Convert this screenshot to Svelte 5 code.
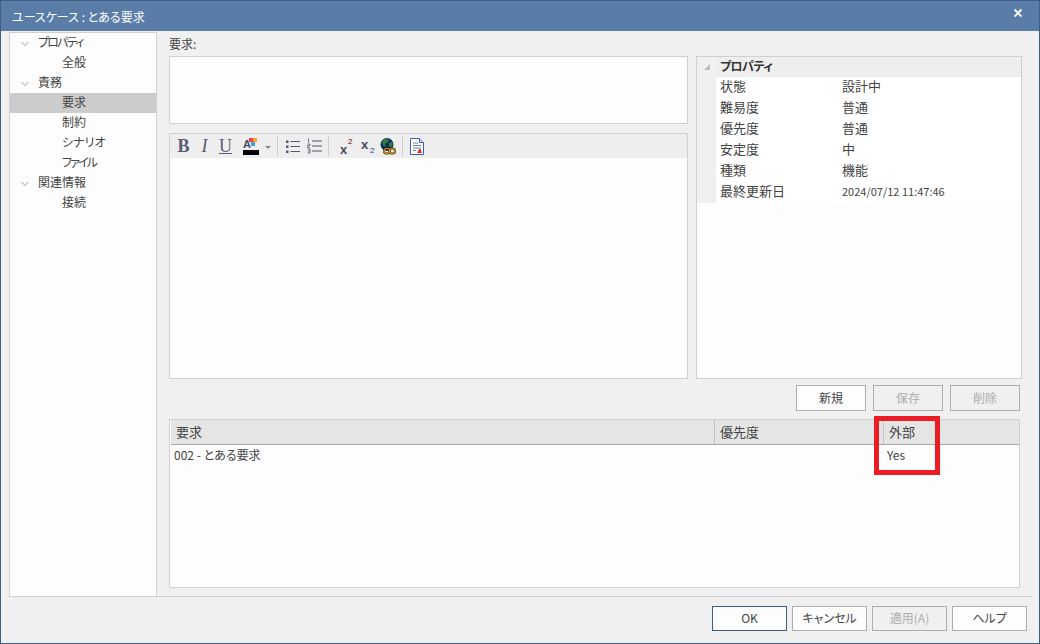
<script lang="ts">
  const tree = [
    { label: 'プロパティ', top: true, tight: true },
    { label: '全般' },
    { label: '責務', top: true },
    { label: '要求', selected: true },
    { label: '制約' },
    { label: 'シナリオ' },
    { label: 'ファイル', tight: true },
    { label: '関連情報', top: true },
    { label: '接続' }
  ];

  const props = [
    ['状態', '設計中'],
    ['難易度', '普通'],
    ['優先度', '普通'],
    ['安定度', '中'],
    ['種類', '機能'],
    ['最終更新日', '2024/07/12 11:47:46']
  ];
</script>

<div class="window">
  <header class="titlebar">
    <span>ユースケース : とある要求</span>
    <svg class="close" width="10" height="10" viewBox="0 0 10 10">
      <path d="M1.5 1.5l7 7M8.5 1.5l-7 7" stroke="#fff" stroke-width="1.8" fill="none" />
    </svg>
  </header>

  <div class="body">
    <nav class="tree">
      {#each tree as item}
        <div class="row" class:selected={item.selected} class:top={item.top} class:tight={item.tight}>
          {#if item.top}
            <svg class="chev" width="8" height="6" viewBox="0 0 8 6">
              <path d="M0.5 1l3.5 3.5L7.5 1" stroke="#999" fill="none" />
            </svg>
          {/if}
          <span>{item.label}</span>
        </div>
      {/each}
    </nav>

    <main class="pane">
      <div class="label">要求:</div>
      <div class="upper">
        <div class="left">
          <div class="box summary"></div>
          <div class="box editor">
            <div class="toolbar">
              <span class="tool bold">B</span>
              <span class="tool italic">I</span>
              <span class="tool under">U</span>
              <span class="color">
                <span class="color-a">A</span>
                <i class="sq red"></i><i class="sq orange"></i><i class="sq blue"></i>
                <i class="bar"></i>
              </span>
              <svg class="caret" width="6" height="3" viewBox="0 0 6 3"><path d="M0 0h6L3 3z" fill="#888" /></svg>
              <i class="sep s1"></i>
              <svg class="list" width="14" height="15" viewBox="0 0 14 15">
                <path d="M0 1.5h2.5v2.5H0zM0 6.5h2.5V9H0zM0 11.5h2.5V14H0z" fill="#55556f" />
                <path d="M4.5 2.500H14M4.500 7.500H14M4.500 12.500H14" stroke="#55556f" />
              </svg>
              <svg class="list l2" width="15" height="16" viewBox="0 0 15 16">
                <path d="M1.500 0.500v4M0.500 6h2.500v1.500H0.500V9.500H3M0.500 11H3v4H0.500M1 13h2" stroke="#55556f" fill="none" stroke-width="0.8" />
                <path d="M5 3H15M5 8H15M5 13H15" stroke="#55556f" />
              </svg>
              <i class="sep s2"></i>
              <span class="script sup"><em>x</em><b>2</b></span>
              <span class="script sub"><em>x</em><b>2</b></span>
              <svg class="globe" width="17" height="17" viewBox="0 0 17 17">
                <circle cx="8" cy="6.500" r="6.500" fill="#0e2a5e" />
                <path d="M4 2l3-1.500 3 1-1 3-3 1 1 3-2 0-2-3zM10 5l3-1.500 1 3-2 3-2-1z" fill="#2e7d3a" />
                <g fill="none" stroke="#4a3000" stroke-width="2">
                  <rect x="5" y="10.500" width="6" height="5" rx="2.500" />
                  <rect x="10" y="10.500" width="6" height="5" rx="2.500" />
                </g>
                <g fill="none" stroke="#e0a830">
                  <rect x="5" y="10.500" width="6" height="5" rx="2.500" />
                  <rect x="10" y="10.500" width="6" height="5" rx="2.500" />
                </g>
              </svg>
              <i class="sep s3"></i>
              <svg class="doc" width="14" height="17" viewBox="0 0 14 17">
                <path d="M0.500 0.500h9l4 4v12H0.500z" fill="#fff" stroke="#3a5fc0" />
                <path d="M9.500 0.500v4h4" fill="#cfd9f2" stroke="#3a5fc0" />
                <path d="M3 5h5M3 7.500h8M3 10h8M3 12.500h3" stroke="#6a7fc0" />
                <path d="M7 15l3-5 2 5z" fill="#d8301c" />
              </svg>
            </div>
          </div>
        </div>

        <section class="box props">
          <div class="props-head">
            <div class="gutter">
              <svg width="6" height="6" viewBox="0 0 6 6"><path d="M6 0v6H0z" fill="#bbb" /></svg>
            </div>
            <strong>プロパティ</strong>
          </div>
          {#each props as [name, value]}
            <div class="prop">
              <div class="gutter"></div>
              <span class="name">{name}</span>
              <span class="value" class:small={value.length > 10}>{value}</span>
            </div>
          {/each}
        </section>
      </div>

      <div class="actions">
        <button>新規</button>
        <button disabled>保存</button>
        <button disabled>削除</button>
      </div>

      <section class="box table">
        <div class="thead">
          <span class="c1">要求</span>
          <span class="c2">優先度</span>
          <span class="c3">外部</span>
          <span class="c4"></span>
        </div>
        <div class="tr">
          <span class="d1">002 - とある要求</span>
          <span class="d3">Yes</span>
        </div>
        <div class="mark"></div>
      </section>
    </main>
  </div>

  <footer class="footer">
    <button class="primary">OK</button>
    <button>キャンセル</button>
    <button disabled>適用(A)</button>
    <button>ヘルプ</button>
  </footer>
</div>

<style>
  :global(body) {
    margin: 0;
  }

  .window {
    box-sizing: border-box;
    width: 1040px;
    height: 644px;
    display: flex;
    flex-direction: column;
    background: #f0f0f0;
    border: 1px solid #3c5f86;
    color: #444;
    font-family: "Noto Sans CJK JP", "Open Sans", sans-serif;
    font-size: 12px;
    font-feature-settings: "palt";
    overflow: hidden;
  }

  .titlebar {
    height: 30px;
    flex: none;
    display: flex;
    align-items: center;
    justify-content: space-between;
    padding: 0 16px 0 11px;
    background: #5a7da8;
    color: #fff;
    font-size: 12px;
  }

  .close {
    margin-top: -7px;
  }

  .body {
    flex: 1;
    min-height: 0;
    display: flex;
    padding: 1px 0 0 8px;
  }

  .tree {
    box-sizing: border-box;
    width: 148px;
    height: 565px;
    flex: none;
    background: #fdfdfd;
    border: 1px solid #d0d0d0;
  }

  .row {
    height: 20px;
    line-height: 18px;
    padding-left: 52px;
    position: relative;
  }

  .row.top {
    padding-left: 28px;
  }

  .row.tight {
    letter-spacing: -1.8px;
  }

  .row.selected {
    background: #cccccc;
  }

  .chev {
    position: absolute;
    left: 11px;
    top: 8px;
  }

  .pane {
    flex: 1;
    min-width: 0;
    padding-left: 12px;
    position: relative;
  }

  .label {
    height: 24px;
    line-height: 23px;
  }

  .upper {
    display: flex;
    gap: 8px;
  }

  .left {
    width: 519px;
    display: flex;
    flex-direction: column;
    gap: 9px;
  }

  .box {
    box-sizing: border-box;
    background: #fdfdfd;
    border: 1px solid #d0d0d0;
  }

  .summary {
    height: 68px;
  }

  .editor {
    height: 246px;
  }

  .toolbar {
    height: 24px;
    display: flex;
    align-items: center;
    background: #eeeeee;
    color: #5a5a74;
    padding-left: 3px;
  }

  .tool {
    width: 21px;
    text-align: center;
    font-family: "Liberation Serif", serif;
    font-size: 18px;
    line-height: 24px;
  }

  .bold {
    font-weight: 700;
  }

  .italic {
    font-style: italic;
  }

  .under {
    text-decoration: underline;
    text-underline-offset: 1px;
  }

  .color {
    position: relative;
    width: 16px;
    height: 20px;
    margin-left: 7px;
  }

  .color-a {
    position: absolute;
    left: 0;
    top: 2px;
    font-size: 11px;
    line-height: 12px;
    font-family: "Liberation Sans", sans-serif;
    font-weight: 700;
    color: #4a4a62;
  }

  .sq {
    position: absolute;
    width: 4px;
    height: 4px;
  }

  .red {
    left: 6px;
    top: 2px;
    background: #f04040;
  }

  .orange {
    left: 10px;
    top: 2px;
    background: #ffa030;
  }

  .blue {
    left: 8px;
    top: 6px;
    background: #3aa0f0;
  }

  .bar {
    position: absolute;
    left: 0;
    right: 0;
    bottom: 1px;
    height: 5px;
    background: #000;
  }

  .caret {
    margin: 3px 0 0 6px;
  }

  .sep {
    width: 1px;
    height: 21px;
    background: #cfcfcf;
  }

  .s1 {
    margin: 0 0 0 6px;
  }

  .list {
    margin-left: 8px;
  }

  .l2 {
    margin-left: 7px;
  }

  .s2 {
    margin-left: 6px;
  }

  .script {
    width: 13px;
    height: 24px;
    font-family: "Liberation Sans", sans-serif;
    font-size: 13px;
    font-weight: 700;
    position: relative;
    color: #4a4a62;
  }

  .script em {
    position: absolute;
    left: 0;
    font-style: normal;
    line-height: 14px;
  }

  .script b {
    position: absolute;
    font-size: 8px;
    font-weight: 400;
    line-height: 8px;
  }

  .sup {
    margin-left: 11px;
  }

  .sup em {
    top: 9px;
  }

  .sup b {
    left: 8px;
    top: 4px;
    color: #800000;
  }

  .sub {
    margin-left: 8px;
  }

  .sub em {
    top: 4px;
  }

  .sub b {
    left: 9px;
    top: 13px;
    color: #2040c0;
  }

  .globe {
    margin-left: 5px;
  }

  .s3 {
    margin-left: 6px;
  }

  .doc {
    margin-left: 7px;
  }

  .props {
    width: 326px;
    background: #fdfdfd;
  }

  .props-head {
    height: 20px;
    display: flex;
    background: #eeeeee;
    line-height: 18px;
    color: #333;
  }

  .props-head strong {
    font-size: 12px;
    padding-left: 4px;
    letter-spacing: -0.6px;
  }

  .gutter {
    width: 19px;
    flex: none;
    align-self: stretch;
    background: #f0f0f0;
    display: flex;
    align-items: center;
    justify-content: center;
  }

  .prop {
    height: 21px;
    line-height: 18px;
    display: flex;
    background: #fff;
    font-size: 13px;
  }

  .name {
    width: 126px;
    flex: none;
    padding-left: 4px;
    box-sizing: border-box;
  }

  .value {
    color: #444;
  }

  .value.small {
    font-size: 11px;
  }

  .actions {
    display: flex;
    justify-content: flex-end;
    gap: 7px;
    width: 851px;
    margin: 6px 0 8px;
  }

  .actions button {
    width: 70px;
    height: 26px;
  }

  button {
    box-sizing: border-box;
    background: #fdfdfd;
    border: 1px solid #adadad;
    border-radius: 0;
    padding: 0 0 2px;
    font: inherit;
    font-feature-settings: inherit;
    color: #444;
  }

  button:disabled {
    color: #adadad;
    background: #f0f0f0;
  }

  .table {
    width: 851px;
    height: 169px;
  }

  .thead {
    height: 25px;
    display: flex;
    background: #e5e5e5;
    border-bottom: 1px solid #a9a9a9;
    box-sizing: border-box;
    margin-left: 1px;
    line-height: 24px;
  }

  .thead span {
    box-sizing: border-box;
    padding-left: 5px;
    font-size: 13px;
  }

  .c1 {
    width: 543px;
  }

  .c2 {
    width: 169px;
    border-left: 1px solid #c4c4c4;
  }

  .c3 {
    width: 60px;
    border-left: 1px solid #c4c4c4;
  }

  .tr {
    display: flex;
    line-height: 20px;
  }

  .d1 {
    width: 713px;
    padding-left: 4px;
  }

  .mark {
    position: absolute;
    left: 717px;
    top: 384px;
    width: 56px;
    height: 49px;
    border: 5px solid #ed1c24;
  }

  .footer {
    height: 47px;
    flex: none;
    box-sizing: border-box;
    margin-right: 7px;
    margin-left: 156px;
    border-top: 1px solid #d0d0d0;
    display: flex;
    justify-content: flex-end;
    gap: 5px;
    padding: 9px 5px 0 0;
  }

  .footer button {
    width: 75px;
    height: 25px;
  }

  .footer .primary {
    border-color: #3c5f86;
  }
</style>
